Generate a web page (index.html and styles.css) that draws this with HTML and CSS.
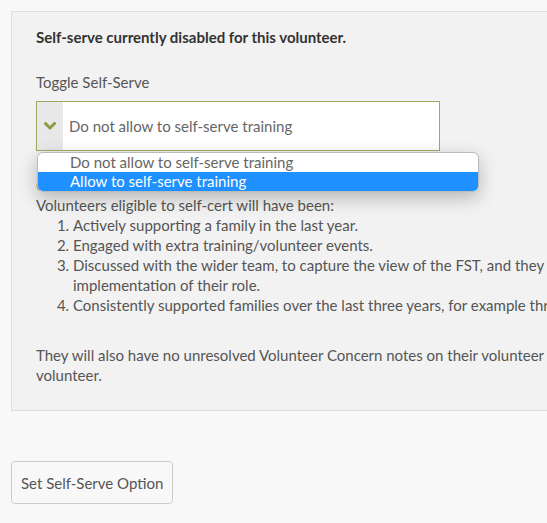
FILE: index.html
```html
<!DOCTYPE html>
<html>
<head>
<meta charset="utf-8">
<link rel="stylesheet" href="styles.css">
</head>
<body>
<div class="page">
  <section class="panel">
    <p class="status">Self-serve currently disabled for this volunteer.</p>
    <label class="label">Toggle Self-Serve</label>
    <div class="select-wrap">
      <div class="select">
        <span class="select-arrow">
          <svg width="12" height="8" viewBox="0 0 12 8"><path d="M1.5 1.5 L6 6 L10.5 1.5" fill="none" stroke="#8e9a48" stroke-width="3" stroke-linecap="round" stroke-linejoin="round"/></svg>
        </span>
        <span class="select-value">Do not allow to self-serve training</span>
      </div>
      <ul class="dropdown">
        <li class="option">Do not allow to self-serve training</li>
        <li class="option selected">Allow to self-serve training</li>
      </ul>
    </div>
    <p class="criteria">Criteria:</p>
    <p class="intro">Volunteers eligible to self-cert will have been:</p>
    <ol class="list">
      <li>Actively supporting a family in the last year.</li>
      <li>Engaged with extra training/volunteer events.</li>
      <li>Discussed with the wider team, to capture the view of the FST, and they feel confident in the volunteer's<br>implementation of their role.</li>
      <li>Consistently supported families over the last three years, for example three families or more.</li>
    </ol>
    <p class="note">They will also have no unresolved Volunteer Concern notes on their volunteer profile, and be an active<br>volunteer.</p>
  </section>
  <button class="btn">Set Self-Serve Option</button>
</div>
</body>
</html>
```

FILE: styles.css
```css
html, body {
  margin: 0;
  padding: 0;
  overflow: hidden;
  background: #f8f8f8;
}
body {
  font-family: "Lato", "Open Sans", sans-serif;
  font-size: 15px;
  color: #555;
}
.page {
  padding: 11px;
  width: 1000px;
}
.panel {
  background: #f2f2f2;
  border: 1px solid #dddddd;
  padding: 14px 24px 25px;
  white-space: nowrap;
}
.status {
  margin: 0 0 23px;
  font-weight: 700;
  color: #333;
  line-height: 22px;
}
.label {
  display: block;
  line-height: 22px;
  margin-bottom: 8px;
}
.select-wrap {
  position: relative;
  width: 404px;
}
.select {
  display: flex;
  height: 48px;
  border: 1px solid #a3a962;
  background: #fff;
}
.select-arrow {
  width: 26px;
  background: #e8e8e8;
  display: flex;
  align-items: center;
  justify-content: center;
}
.select-value {
  display: flex;
  align-items: center;
  padding-left: 6px;
  color: #666;
}
.dropdown {
  position: absolute;
  left: 1px;
  top: 51px;
  width: 440px;
  margin: 0;
  padding: 0;
  list-style: none;
  background: #fff;
  border: 1px solid #bbb;
  border-radius: 6px;
  overflow: hidden;
  box-shadow: 0 6px 18px rgba(0,0,0,0.25);
}
.option {
  height: 19px;
  line-height: 19px;
  padding-left: 32px;
  color: #666;
}
.option.selected {
  background: #1e90ff;
  color: #fff;
}
.criteria {
  margin: 24px 0 0;
  line-height: 20px;
}
.intro {
  margin: 0;
  line-height: 20px;
}
.list {
  margin: 0;
  padding-left: 37px;
  line-height: 20px;
}
.note {
  margin: 30px 0 0;
  line-height: 20px;
}
.btn {
  margin-top: 50px;
  font: inherit;
  color: #555;
  background: #f8f8f8;
  border: 1px solid #ccc;
  border-radius: 4px;
  height: 43px;
  padding: 0 9px;
}
```
